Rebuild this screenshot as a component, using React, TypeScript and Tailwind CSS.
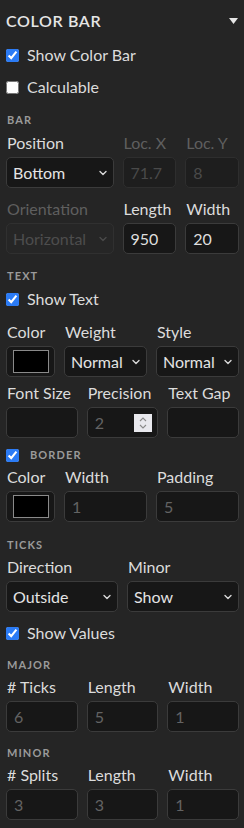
import React from "react";

const Chevron = ({ dim }: { dim?: boolean }) => (
  <svg
    width="8"
    height="6"
    viewBox="0 0 8 6"
    className="pointer-events-none absolute right-[6px] top-1/2 -translate-y-1/2"
  >
    <path
      d="M1 1.5 L4 4.5 L7 1.5"
      fill="none"
      stroke={dim ? "#4a4a4a" : "#d8d8d8"}
      strokeWidth="1.4"
      strokeLinecap="round"
      strokeLinejoin="round"
    />
  </svg>
);

const Label = ({ children, dim }: { children: React.ReactNode; dim?: boolean }) => (
  <div
    className={`h-[20px] leading-[20px] mb-[4px] pl-[1px] text-[16px] whitespace-nowrap ${
      dim ? "text-[#5f5f5f]" : "text-[#dcdcdc]"
    }`}
  >
    {children}
  </div>
);

const Select = ({ value, dim }: { value: string; dim?: boolean }) => (
  <div
    className={`relative h-[31px] rounded-[5px] border flex items-center pl-[6px] text-[16px] ${
      dim
        ? "bg-[#262626] border-[#303030] text-[#4d4d4d]"
        : "bg-[#171717] border-[#3b3b3b] text-[#e4e4e4]"
    }`}
  >
    {value}
    <Chevron dim={dim} />
  </div>
);

const Input = ({
  value,
  kind,
  spinner,
}: {
  value?: string;
  kind?: "dis" | "ph" | "val";
  spinner?: boolean;
}) => (
  <div
    className={`relative h-[31px] rounded-[5px] border flex items-center pl-[7px] text-[16px] ${
      kind === "dis"
        ? "bg-[#1e1e1e] border-[#2e2e2e] text-[#4a4a4a]"
        : kind === "val"
        ? "bg-[#171717] border-[#3b3b3b] text-[#dedede]"
        : "bg-[#171717] border-[#3b3b3b] text-[#636363]"
    }`}
  >
    {value}
    {spinner && (
      <div className="absolute right-[5px] top-1/2 -translate-y-1/2 w-[18px] h-[18px] bg-[#e9e9ee] flex flex-col items-center justify-center gap-[2px]">
        <svg width="8" height="5" viewBox="0 0 8 5">
          <path d="M1 4 L4 1 L7 4" fill="none" stroke="#8a8a8a" strokeWidth="1.1" />
        </svg>
        <svg width="8" height="5" viewBox="0 0 8 5">
          <path d="M1 1 L4 4 L7 1" fill="none" stroke="#8a8a8a" strokeWidth="1.1" />
        </svg>
      </div>
    )}
  </div>
);

const Swatch = () => (
  <div className="h-[31px] rounded-[5px] border border-[#3b3b3b] bg-[#171717] flex items-center justify-center">
    <div className="w-[36px] h-[23px] bg-black border border-[#8a8a8a]" />
  </div>
);

const Check = ({
  checked,
  children,
  section,
  className = "",
}: {
  checked?: boolean;
  children: React.ReactNode;
  section?: boolean;
  className?: string;
}) => (
  <div className={`h-[20px] flex items-center ${className}`}>
    <input
      type="checkbox"
      defaultChecked={checked}
      className="m-0 w-[13px] h-[13px] accent-[#2b7bf5]"
    />
    {section ? (
      <span className="ml-[11px] text-[11px] font-bold tracking-[0.1em] text-[#9a9a9a]">
        {children}
      </span>
    ) : (
      <span className="ml-[8px] text-[16px] text-[#dcdcdc]">{children}</span>
    )}
  </div>
);

const Section = ({ children, className = "" }: { children: React.ReactNode; className?: string }) => (
  <div
    className={`h-[16px] leading-[16px] pl-[1px] text-[11px] font-bold tracking-[0.1em] text-[#9a9a9a] ${className}`}
  >
    {children}
  </div>
);

export default function App() {
  return (
    <div
      className="w-[244px] h-[828px] bg-[#252525] pl-[6px] pr-[5px] overflow-hidden"
      style={{ fontFamily: "Lato, 'Noto Sans', sans-serif" }}
    >
      <div className="h-[42px] flex items-center justify-between">
        <span className="text-[16px] font-semibold tracking-[0.04em] text-[#e6e6e6]">COLOR BAR</span>
        <svg width="9" height="6" viewBox="0 0 9 6" className="mr-[1px]">
          <path d="M0 0 H9 L4.5 6 Z" fill="#e6e6e6" />
        </svg>
      </div>

      <Check checked className="mt-[3px]">
        Show Color Bar
      </Check>
      <Check className="mt-[12px]">Calculable</Check>

      <Section className="mt-[15px]">BAR</Section>
      <div className="mt-[5px] grid grid-cols-[2fr_1fr_1fr] gap-x-[9px]">
        <div>
          <Label>Position</Label>
          <Select value="Bottom" />
        </div>
        <div>
          <Label dim>Loc. X</Label>
          <Input value="71.7" kind="dis" />
        </div>
        <div>
          <Label dim>Loc. Y</Label>
          <Input value="8" kind="dis" />
        </div>
      </div>
      <div className="mt-[11px] grid grid-cols-[2fr_1fr_1fr] gap-x-[9px]">
        <div>
          <Label dim>Orientation</Label>
          <Select value="Horizontal" dim />
        </div>
        <div>
          <Label>Length</Label>
          <Input value="950" kind="val" />
        </div>
        <div>
          <Label>Width</Label>
          <Input value="20" kind="val" />
        </div>
      </div>

      <Section className="mt-[14px]">TEXT</Section>
      <Check checked className="mt-[5px]">
        Show Text
      </Check>
      <div className="mt-[13px] grid grid-cols-[49px_1fr_1fr] gap-x-[9px]">
        <div>
          <Label>Color</Label>
          <Swatch />
        </div>
        <div>
          <Label>Weight</Label>
          <Select value="Normal" />
        </div>
        <div>
          <Label>Style</Label>
          <Select value="Normal" />
        </div>
      </div>
      <div className="mt-[6px] grid grid-cols-3 gap-x-[9px]">
        <div>
          <Label>Font Size</Label>
          <Input />
        </div>
        <div>
          <Label>Precision</Label>
          <Input value="2" kind="ph" spinner />
        </div>
        <div>
          <Label>Text Gap</Label>
          <Input />
        </div>
      </div>

      <Check checked section className="mt-[7px]">
        BORDER
      </Check>
      <div className="mt-[2px] grid grid-cols-[49px_1fr_1fr] gap-x-[9px]">
        <div>
          <Label>Color</Label>
          <Swatch />
        </div>
        <div>
          <Label>Width</Label>
          <Input value="1" kind="ph" />
        </div>
        <div>
          <Label>Padding</Label>
          <Input value="5" kind="ph" />
        </div>
      </div>

      <Section className="mt-[15px]">TICKS</Section>
      <div className="mt-[4px] grid grid-cols-2 gap-x-[9px]">
        <div>
          <Label>Direction</Label>
          <Select value="Outside" />
        </div>
        <div>
          <Label>Minor</Label>
          <Select value="Show" />
        </div>
      </div>
      <Check checked className="mt-[11px]">
        Show Values
      </Check>

      <Section className="mt-[14px]">MAJOR</Section>
      <div className="mt-[4px] grid grid-cols-3 gap-x-[9px]">
        <div>
          <Label># Ticks</Label>
          <Input value="6" kind="ph" />
        </div>
        <div>
          <Label>Length</Label>
          <Input value="5" kind="ph" />
        </div>
        <div>
          <Label>Width</Label>
          <Input value="1" kind="ph" />
        </div>
      </div>

      <Section className="mt-[13px]">MINOR</Section>
      <div className="mt-[4px] grid grid-cols-3 gap-x-[9px]">
        <div>
          <Label># Splits</Label>
          <Input value="3" kind="ph" />
        </div>
        <div>
          <Label>Length</Label>
          <Input value="3" kind="ph" />
        </div>
        <div>
          <Label>Width</Label>
          <Input value="1" kind="ph" />
        </div>
      </div>
    </div>
  );
}
